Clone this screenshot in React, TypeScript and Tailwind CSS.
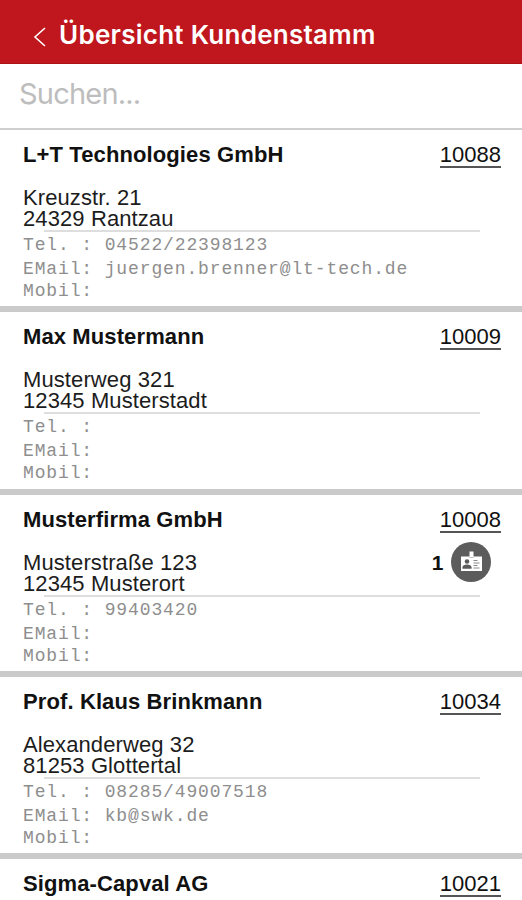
type Customer = {
  name: string;
  id: string;
  street?: string;
  city?: string;
  tel?: string;
  email?: string;
  contacts?: number;
};

const customers: Customer[] = [
  { name: "L+T Technologies GmbH", id: "10088", street: "Kreuzstr. 21", city: "24329 Rantzau", tel: "04522/22398123", email: "juergen.brenner@lt-tech.de" },
  { name: "Max Mustermann", id: "10009", street: "Musterweg 321", city: "12345 Musterstadt" },
  { name: "Musterfirma GmbH", id: "10008", street: "Musterstraße 123", city: "12345 Musterort", tel: "99403420", contacts: 1 },
  { name: "Prof. Klaus Brinkmann", id: "10034", street: "Alexanderweg 32", city: "81253 Glottertal", tel: "08285/49007518", email: "kb@swk.de" },
  { name: "Sigma-Capval AG", id: "10021" },
];

function BadgeIcon() {
  return (
    <svg className="h-10 w-10" viewBox="0 0 40 40">
      <circle cx="20" cy="20" r="20" fill="#5c5c5c" />
      <path d="M18.500 9.500h4v5h8.500v14.500h-21v-14.500h8.500z" fill="#fff" />
      <path d="M18.500 15.500h4" stroke="#bbb" strokeWidth="1" />
      <circle cx="16" cy="19.500" r="2.300" fill="#5c5c5c" />
      <path d="M11.500 26.800v-1.500c0-2 2.200-2.800 4.500-2.800s4.500.8 4.500 2.800v1.500z" fill="#5c5c5c" />
      <path d="M22.500 18.500h4M22.500 21h6M22.500 23.500h4M22.500 26h6" stroke="#888" strokeWidth="1" />
    </svg>
  );
}

function CustomerCard({ c }: { c: Customer }) {
  return (
    <article className="relative h-[182.300px] shrink-0 border-b-[6px] border-[#cacaca] pl-[23px] pr-[21px] pt-[13px]">
      <div className="flex h-[44px] justify-between text-[22px] leading-[24px] text-[#111]">
        <h2 className="font-bold tracking-[0.110px]">{c.name}</h2>
        <span className="h-[25px] border-b-2 border-[#555]">{c.id}</span>
      </div>
      {c.street && (
        <>
          <div className="h-[42px] text-[22px] leading-[21px] tracking-[0.100px] text-[#1c1c1c]">
            <p>{c.street}</p>
            <p>{c.city}</p>
          </div>
          <div className="ml-[21px] mr-[21px] mt-px h-[2px] bg-[#dedede]" />
          <div className="whitespace-pre pt-[2px] font-['Liberation_Mono','Courier_New',monospace] text-[18px] leading-[22px] tracking-[0.870px] text-[#8e8e8e]">
            <p className="h-[24px]">{"Tel. : " + (c.tel ?? "")}</p>
            <p className="h-[22px]">{"EMail: " + (c.email ?? "")}</p>
            <p>Mobil:</p>
          </div>
        </>
      )}
      {c.contacts && (
        <div className="absolute right-[31.500px] top-[47px] flex items-center gap-[7px]">
          <span className="pt-[3px] text-[21px] font-bold leading-6 text-[#111]">{c.contacts}</span>
          <BadgeIcon />
        </div>
      )}
    </article>
  );
}

export default function App() {
  return (
    <main className="flex h-[900px] w-[522px] flex-col overflow-hidden bg-white font-['Liberation_Sans',Arial,sans-serif]">
      <header className="flex h-16 shrink-0 items-center border-b border-[#ad1118] bg-[#c0161d] pl-[33px] pt-[6px] text-white">
        <svg className="mt-[4px] h-[20px] w-[14px]" viewBox="0 0 14 20" fill="none" stroke="currentColor" strokeWidth="1.600">
          <path d="M12 1L2 10l10 9" />
        </svg>
        <h1 className="ml-[12px] whitespace-nowrap font-['Inter',sans-serif] text-[26px] font-semibold leading-8 tracking-[0.270px]">Übersicht Kundenstamm</h1>
      </header>
      <div className="h-[66px] shrink-0 border-b-2 border-[#cfcfcf] pl-[19px] pt-[13px] font-['Inter',sans-serif] text-[29px] leading-[34px] tracking-[-0.800px] text-[#bdbdbd]">Suchen...</div>
      {customers.map((c) => (
        <CustomerCard key={c.id} c={c} />
      ))}
    </main>
  );
}
